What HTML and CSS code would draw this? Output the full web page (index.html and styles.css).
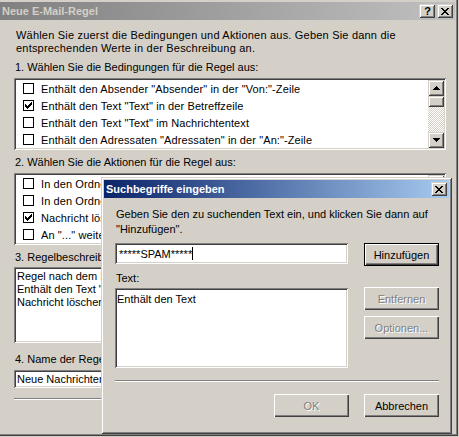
FILE: index.html
```html
<!DOCTYPE html>
<html lang="de">
<head>
<meta charset="utf-8">
<title>Neue E-Mail-Regel</title>
<link rel="stylesheet" href="styles.css">
</head>
<body>
<div class="win">
  <div class="caption inactive">
    <span class="cap-title">Neue E-Mail-Regel</span>
    <span class="cap-btns">
      <span class="cbtn help">?</span>
      <span class="cbtn"><svg class="xglyph" width="8" height="7" viewBox="0 0 8 7"><path d="M0 0h2v1h-2zM6 0h2v1h-2zM1 1h2v1h-2zM5 1h2v1h-2zM2 2h4v1h-4zM3 3h2v1h-2zM2 4h4v1h-4zM1 5h2v1h-2zM5 5h2v1h-2zM0 6h2v1h-2zM6 6h2v1h-2z"/></svg></span>
    </span>
  </div>

  <div class="body">
    <p class="intro">Wählen Sie zuerst die Bedingungen und Aktionen aus. Geben Sie dann die<br>entsprechenden Werte in der Beschreibung an.</p>

    <p class="lbl">1. Wählen Sie die Bedingungen für die Regel aus:</p>
    <div class="listbox">
      <ul class="rows">
        <li><span class="cb"></span>Enthält den Absender "Absender" in der "Von:"-Zeile</li>
        <li><span class="cb"><svg width="7" height="7" viewBox="0 0 7 7"><path d="M6 0h1v1h-1zM5 1h2v1h-2zM0 2h1v1h-1zM4 2h3v1h-3zM0 3h2v1h-2zM3 3h3v1h-3zM0 4h5v1h-5zM1 5h3v1h-3zM2 6h1v1h-1z"/></svg></span>Enthält den Text "Text" in der Betreffzeile</li>
        <li><span class="cb"></span>Enthält den Text "Text" im Nachrichtentext</li>
        <li><span class="cb"></span>Enthält den Adressaten "Adressaten" in der "An:"-Zeile</li>
      </ul>
      <div class="vscroll">
        <span class="sbtn"><svg width="7" height="4" viewBox="0 0 7 4"><path d="M3 0h1v1h-1zM2 1h3v1h-3zM1 2h5v1h-5zM0 3h7v1h-7z"/></svg></span>
        <span class="thumb"></span>
        <span class="track"></span>
        <span class="sbtn"><svg width="7" height="4" viewBox="0 0 7 4"><path d="M0 0h7v1h-7zM1 1h5v1h-5zM2 2h3v1h-3zM3 3h1v1h-1z"/></svg></span>
      </div>
    </div>

    <p class="lbl">2. Wählen Sie die Aktionen für die Regel aus:</p>
    <div class="listbox">
      <ul class="rows">
        <li><span class="cb"></span>In den Ordner "..." verschieben</li>
        <li><span class="cb"></span>In den Ordner "..." kopieren</li>
        <li><span class="cb"><svg width="7" height="7" viewBox="0 0 7 7"><path d="M6 0h1v1h-1zM5 1h2v1h-2zM0 2h1v1h-1zM4 2h3v1h-3zM0 3h2v1h-2zM3 3h3v1h-3zM0 4h5v1h-5zM1 5h3v1h-3zM2 6h1v1h-1z"/></svg></span>Nachricht löschen</li>
        <li><span class="cb"></span>An "..." weiterleiten</li>
      </ul>
      <div class="vscroll">
        <span class="sbtn"><svg width="7" height="4" viewBox="0 0 7 4"><path d="M3 0h1v1h-1zM2 1h3v1h-3zM1 2h5v1h-5zM0 3h7v1h-7z"/></svg></span>
        <span class="track short"></span>
        <span class="thumb"></span>
        <span class="track"></span>
        <span class="sbtn"><svg width="7" height="4" viewBox="0 0 7 4"><path d="M0 0h7v1h-7zM1 1h5v1h-5zM2 2h3v1h-3zM3 3h1v1h-1z"/></svg></span>
      </div>
    </div>

    <p class="lbl lbl3">3. Regelbeschreibung (klicken Sie auf einen unterstrichenen Wert, um ihn zu bearbeiten):</p>
    <div class="desc">
      <div>Regel nach dem Eintreffen der Nachricht anwenden</div>
      <div>Enthält den Text "Text" in der Betreffzeile</div>
      <div>Nachricht löschen</div>
    </div>

    <p class="lbl lbl4">4. Name der Regel:</p>
    <div class="field">Neue Nachrichtenregel #1</div>

    <div class="sep"></div>
  </div>

  <div class="dialog">
    <div class="caption active">
      <span class="cap-title">Suchbegriffe eingeben</span>
      <span class="cap-btns">
        <span class="cbtn"><svg class="xglyph" width="8" height="7" viewBox="0 0 8 7"><path d="M0 0h2v1h-2zM6 0h2v1h-2zM1 1h2v1h-2zM5 1h2v1h-2zM2 2h4v1h-4zM3 3h2v1h-2zM2 4h4v1h-4zM1 5h2v1h-2zM5 5h2v1h-2zM0 6h2v1h-2zM6 6h2v1h-2z"/></svg></span>
      </span>
    </div>
    <div class="dlg-body">
      <p class="dlg-text">Geben Sie den zu suchenden Text ein, und klicken Sie dann auf<br>"Hinzufügen".</p>
      <div class="dlg-row">
        <div class="field term">*****SPAM*****<span class="caret"></span></div>
        <span class="btn default">Hinzufügen</span>
      </div>
      <div class="dlg-row2">
        <div class="col-left">
          <p class="txt-lbl">Text:</p>
          <div class="terms">Enthält den Text</div>
        </div>
        <div class="col-right">
          <span class="btn disabled">Entfernen</span>
          <span class="btn disabled">Optionen...</span>
        </div>
      </div>
      <div class="sep dlg-sep"></div>
      <div class="dlg-actions">
        <span class="btn disabled">OK</span>
        <span class="btn">Abbrechen</span>
      </div>
    </div>
  </div>
</div>
</body>
</html>
```

FILE: styles.css
```css
* { box-sizing: border-box; }

html, body {
  margin: 0;
  padding: 0;
}

body {
  width: 459px;
  height: 437px;
  overflow: hidden;
  background: #d4d0c8;
  font-family: "Liberation Sans", Arial, sans-serif;
  font-size: 11px;
  color: #000;
}

p { margin: 0; }

.win {
  position: relative;
  width: 458px;
  height: 436px;
  padding-top: 2px;
  background: #d4d0c8;
  border-right: 1px solid #404040;
  border-bottom: 1px solid #404040;
  box-shadow: inset -1px -1px #808080;
}

/* title bars */
.caption {
  height: 18px;
  display: flex;
  align-items: center;
  justify-content: space-between;
  padding: 0 2px;
}

.win > .caption { margin-right: 2px; }

.caption.inactive {
  background: linear-gradient(to right, #808080, #c0c0c0);
  color: #d4d0c8;
}

.caption.active {
  background: linear-gradient(to right, #0a246a, #a6caf0);
  color: #fff;
}

.cap-title {
  font-weight: bold;
  font-size: 11px;
  white-space: nowrap;
}

.cap-btns {
  display: flex;
  gap: 2px;
}

.cbtn {
  width: 16px;
  height: 14px;
  display: flex;
  align-items: center;
  justify-content: center;
  background: #d4d0c8;
  box-shadow: inset 1px 1px #d4d0c8, inset -1px -1px #404040, inset 2px 2px #fff, inset -2px -2px #808080;
  color: #000;
  font-weight: bold;
  font-size: 11px;
  line-height: 14px;
}

.cbtn.help { padding-left: 1px; }

.cbtn svg { display: block; fill: #000; shape-rendering: crispEdges; }

/* main body */
.body {
  padding: 9px 11px 0 14px;
}

.intro {
  line-height: 13px;
  padding-left: 2px;
  letter-spacing: 0.2px;
  white-space: nowrap;
}

.lbl {
  line-height: 13px;
  margin: 6px 0 4px;
  padding-left: 1px;
  white-space: nowrap;
}

.lbl3 { margin-bottom: 3px; }
.lbl4 { margin-top: 10px; }

.listbox {
  height: 72px;
  padding: 2px;
  display: flex;
  background: #fff;
  box-shadow: inset 1px 1px #808080, inset -1px -1px #fff, inset 2px 2px #404040, inset -2px -2px #d4d0c8;
}

.rows {
  list-style: none;
  margin: 0;
  padding: 0;
  flex: 1;
  overflow: hidden;
}

.rows li {
  height: 17px;
  display: flex;
  align-items: center;
  white-space: nowrap;
  padding-left: 7px;
  letter-spacing: 0.1px;
}

.cb {
  width: 11px;
  height: 11px;
  margin-right: 7px;
  border: 1px solid #000;
  background: #fff;
  display: flex;
  align-items: center;
  justify-content: center;
  flex: none;
}

.cb svg { display: block; fill: #000; shape-rendering: crispEdges; }

.vscroll {
  width: 16px;
  display: flex;
  flex-direction: column;
}

.sbtn {
  height: 16px;
  flex: none;
  display: flex;
  align-items: center;
  justify-content: center;
  background: #d4d0c8;
  box-shadow: inset 1px 1px #d4d0c8, inset -1px -1px #404040, inset 2px 2px #fff, inset -2px -2px #808080;
}

.sbtn svg { display: block; fill: #000; shape-rendering: crispEdges; }

.thumb {
  height: 11px;
  flex: none;
  background: #d4d0c8;
  box-shadow: inset 1px 1px #d4d0c8, inset -1px -1px #404040, inset 2px 2px #fff, inset -2px -2px #808080;
}

.track {
  flex: 1;
  background-image: conic-gradient(#fff 25%, #d4d0c8 0 50%, #fff 0 75%, #d4d0c8 0);
  background-size: 2px 2px;
}

.track.short { flex: none; height: 6px; }

.desc {
  height: 76px;
  padding: 3px 3px;
  line-height: 13px;
  background: #fff;
  white-space: nowrap;
  overflow: hidden;
  box-shadow: inset 1px 1px #808080, inset -1px -1px #fff, inset 2px 2px #404040, inset -2px -2px #d4d0c8;
}

.field {
  height: 18px;
  padding: 0 3px;
  display: flex;
  align-items: center;
  background: #fff;
  white-space: nowrap;
  overflow: hidden;
  box-shadow: inset 1px 1px #808080, inset -1px -1px #fff, inset 2px 2px #404040, inset -2px -2px #d4d0c8;
}

.sep {
  height: 2px;
  margin-top: 10px;
  border-top: 1px solid #808080;
  border-bottom: 1px solid #fff;
}

/* dialog */
.dialog {
  position: absolute;
  left: 101px;
  top: 177px;
  width: 351px;
  height: 257px;
  padding: 3px;
  background: #d4d0c8;
  box-shadow: inset 1px 1px #d4d0c8, inset -1px -1px #404040, inset 2px 2px #fff, inset -2px -2px #808080;
}

.dlg-body {
  padding: 0 10px 0 11px;
}

.dlg-text {
  margin-top: 9px;
  line-height: 15px;
  padding-left: 1px;
  white-space: nowrap;
}

.dlg-row {
  margin-top: 6px;
  display: flex;
  justify-content: space-between;
  align-items: flex-start;
}

.field.term {
  width: 233px;
  height: 21px;
  padding-left: 4px;
}

.caret {
  display: inline-block;
  width: 1px;
  height: 13px;
  background: #000;
}

.btn {
  width: 75px;
  height: 23px;
  display: flex;
  align-items: center;
  justify-content: center;
  background: #d4d0c8;
  white-space: nowrap;
  box-shadow: inset 1px 1px #fff, inset -1px -1px #404040, inset -2px -2px #808080;
}

.btn.default {
  border: 1px solid #000;
  box-shadow: inset 1px 1px #fff, inset -1px -1px #404040, inset -2px -2px #808080;
}

.btn.disabled {
  color: #808080;
  text-shadow: 1px 1px 0 #fff;
}

.dlg-row2 {
  display: flex;
  justify-content: space-between;
}

.col-left { width: 233px; }

.txt-lbl {
  margin-top: 6px;
  line-height: 13px;
  padding-left: 1px;
}

.terms {
  margin-top: 3px;
  height: 80px;
  padding: 3px 2px;
  line-height: 16px;
  background: #fff;
  white-space: nowrap;
  box-shadow: inset 1px 1px #808080, inset -1px -1px #fff, inset 2px 2px #404040, inset -2px -2px #d4d0c8;
}

.col-right {
  padding-top: 21px;
  display: flex;
  flex-direction: column;
  gap: 6px;
}

.sep.dlg-sep { margin-top: 12px; }

.dlg-actions {
  margin-top: 12px;
  display: flex;
  justify-content: flex-end;
  gap: 15px;
}
```
